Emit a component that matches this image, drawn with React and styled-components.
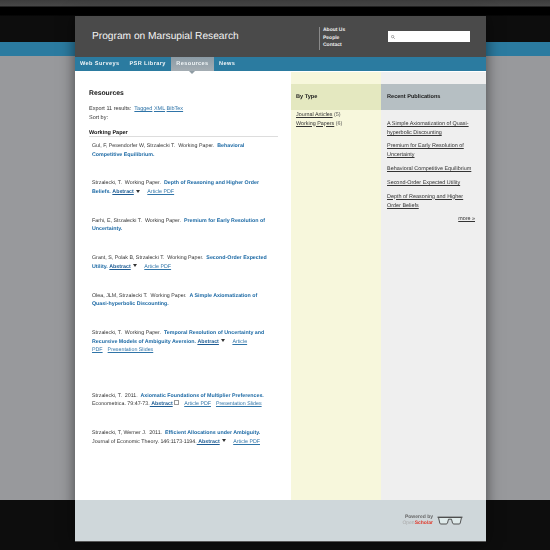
import React from 'react';
import styled, { createGlobalStyle } from 'styled-components';

const GlobalStyle = createGlobalStyle`
  html, body {
    margin: 0;
    padding: 0;
  }
  body {
    width: 550px;
    height: 550px;
    overflow: hidden;
    font-family: "Liberation Sans", Arial, sans-serif;
    text-rendering: geometricPrecision;
    background: linear-gradient(
      #3c3c3c 0, #474747 6px, #000 7px, #000 15px, #0d0d0d 16px, #0d0d0d 42px,
      #2b7ba0 42px, #2b7ba0 56px, #98999c 56px, #98999c 500px, #0d0d0d 500px
    );
  }
`;

const Card = styled.div`
  width: 411px;
  margin: 16px 0 0 75px;
  box-shadow: 0 0 14px rgba(0, 0, 0, 0.55);
  border-bottom: 1px solid #555;
  filter: blur(0.3px);
`;

const Header = styled.header`
  height: 41px;
  background: #4a4a4a;
  display: flex;
  align-items: center;
  padding-left: 17px;
`;

const SiteTitle = styled.h1`
  margin: 0;
  width: 227px;
  font-size: 10.2px;
  font-weight: normal;
  color: #f4f4f4;
`;

const HeaderLinks = styled.ul`
  list-style: none;
  margin: 4px 0 0;
  padding: 0 0 0 3px;
  width: 65px;
  border-left: 1px solid #8a8a8a;
  font-size: 5px;
  font-weight: bold;
  line-height: 7.5px;
  color: #eee;
`;

const SearchBox = styled.div`
  width: 82px;
  height: 11px;
  background: #fff;
  display: flex;
  align-items: center;
  padding-left: 3px;
  box-sizing: border-box;
  color: #777;
`;

const Nav = styled.nav`
  height: 14px;
  background: #2b7ba0;
  display: flex;
  border-bottom: 1px solid #fff;
`;

const Tab = styled.a`
  position: relative;
  display: flex;
  align-items: center;
  padding: 0 ${p => (p.$active ? 5.5 : 5)}px;
  font-size: 5.6px;
  font-weight: bold;
  letter-spacing: 0.4px;
  color: #f2f6f8;
  background: ${p => (p.$active ? 'linear-gradient(#8b9ba5, #a4adb3)' : 'transparent')};
  ${p => p.$active && `
    &::after {
      content: '';
      position: absolute;
      left: 50%;
      bottom: -3px;
      margin-left: -3px;
      border: solid transparent;
      border-width: 3px 3px 0;
      border-top-color: #8f9ca4;
    }
  `}
`;

const Main = styled.div`
  display: flex;
  height: 428px;
`;

const Content = styled.main`
  width: 216px;
  box-sizing: border-box;
  padding: 17px 13px 0 14px;
  background: #fff;
  font-size: 5.5px;
  line-height: 8.7px;
  color: #333;
`;

const PageTitle = styled.h2`
  margin: 0 0 7px;
  font-size: 6.8px;
  line-height: 9px;
  color: #111;
`;

const Meta = styled.div`
  color: #333;
`;

const TextLink = styled.a`
  color: #2f74a8;
  text-decoration: underline;
  margin-left: ${p => p.$gap || 0}px;
`;

const GroupTitle = styled.h3`
  margin: 7.2px 0 0;
  border-bottom: 1px solid #ddd;
  font-size: 5.5px;
  line-height: 6px;
  color: #111;
`;

const Entries = styled.div`
  padding: 5.3px 8px 0 3px;
  font-size: 5.3px;
`;

const Entry = styled.p`
  margin: 0 0 ${p => p.$after || 20}px;
  white-space: nowrap;
`;

const PubTitle = styled.a`
  color: #1d6aa5;
  font-weight: bold;
  margin-left: 1.5px;
`;

const AbstractLink = styled.a`
  color: #1d5c94;
  font-weight: bold;
  text-decoration: underline;
`;

const Caret = styled.span`
  display: inline-block;
  margin: 0 7.5px 0 2px;
  border: solid transparent;
  border-width: 3px 2px 0;
  border-top-color: #333;
  vertical-align: 0.5px;
`;

const ExternalMark = styled.span`
  display: inline-block;
  width: 3px;
  height: 3px;
  margin: 0 5px 0 1.5px;
  border: 0.5px solid #999;
  vertical-align: 0;
`;

const TypeColumn = styled.aside`
  width: 90px;
  padding-top: 12px;
  background: #f7f7dc;
`;

const RecentColumn = styled.aside`
  width: 105px;
  padding-top: 12px;
  background: #efefef;
`;

const SideHeading = styled.h4`
  margin: 0;
  height: 26px;
  box-sizing: border-box;
  padding-left: ${p => p.$indent}px;
  display: flex;
  align-items: center;
  background: ${p => p.$bg};
  font-size: 5.6px;
  color: #1a1a1a;
`;

const TypeList = styled.ul`
  list-style: none;
  margin: 0;
  padding: 0.8px 0 0 5px;
  font-size: 5.4px;
  line-height: 8.7px;
  color: #555;
`;

const SideLink = styled.a`
  color: #333;
  text-decoration: underline;
`;

const RecentList = styled.ul`
  list-style: none;
  margin: 0;
  padding: 9.8px 14px 0 6px;
  font-size: 5.45px;
  line-height: 9px;
`;

const RecentItem = styled.li`
  margin-bottom: 4.7px;
`;

const More = styled.div`
  padding-right: 11px;
  text-align: right;
  font-size: 5.4px;
  line-height: 9px;
  color: #333;
  text-decoration: underline;
`;

const Footer = styled.footer`
  height: 41px;
  background: #cfd7da;
  display: flex;
  justify-content: flex-end;
  align-items: center;
  padding-right: 23px;
  gap: 4px;
`;

const PoweredBy = styled.div`
  font-size: 5px;
  line-height: 5.5px;
  font-weight: bold;
  text-align: right;
  color: #666;
`;

const OpenWord = styled.span`
  color: #aaa;
  font-weight: normal;
`;

const ScholarWord = styled.span`
  color: #e0392b;
`;

const abstractAnd = (slides) => (
  <>
    <TextLink>Article PDF</TextLink>
    {slides && <TextLink $gap={5}>Presentation Slides</TextLink>}
  </>
);

const Glasses = () => (
  <svg width="26" height="9" viewBox="0 0 26 9" fill="none">
    <path d="M0.5 1.2H25.5" stroke="#444" strokeWidth="1.1" />
    <path d="M1.5 1.5L2.8 7.2C3 7.9 3.4 8 4 8H9.2C9.8 8 10.2 7.7 10.5 7L11.5 3.2H14.5L15.5 7C15.8 7.7 16.2 8 16.8 8H22C22.6 8 23 7.9 23.2 7.2L24.5 1.5Z" fill="#dfeaea" stroke="#444" strokeWidth="0.9" />
  </svg>
);

const App = () => (
  <>
    <GlobalStyle />
    <Card>
      <Header>
        <SiteTitle>Program on Marsupial Research</SiteTitle>
        <HeaderLinks>
          <li>About Us</li>
          <li>People</li>
          <li>Contact</li>
        </HeaderLinks>
        <SearchBox>
          <svg width="4" height="4" viewBox="0 0 10 10" fill="none" stroke="currentColor" strokeWidth="1.6">
            <circle cx="4" cy="4" r="3" />
            <path d="M6.3 6.3L9.5 9.5" />
          </svg>
        </SearchBox>
      </Header>
      <Nav>
        <Tab>Web Surveys</Tab>
        <Tab>PSR Library</Tab>
        <Tab $active>Resources</Tab>
        <Tab>News</Tab>
      </Nav>
      <Main>
        <Content>
          <PageTitle>Resources</PageTitle>
          <Meta>
            Export 11 results:&nbsp; <TextLink>Tagged</TextLink> <TextLink>XML</TextLink> <TextLink>BibTex</TextLink>
          </Meta>
          <Meta>Sort by:</Meta>
          <GroupTitle>Working Paper</GroupTitle>
          <Entries>
            <Entry>
              Gul, F, Pesendorfer W, Strzalecki T.&nbsp; Working Paper.
              <PubTitle> Behavioral<br />Competitive Equilibrium.</PubTitle>
            </Entry>
            <Entry>
              Strzalecki, T.&nbsp; Working Paper.
              <PubTitle> Depth of Reasoning and Higher Order<br />Beliefs.</PubTitle> <AbstractLink>Abstract</AbstractLink><Caret />{abstractAnd()}
            </Entry>
            <Entry>
              Farhi, E, Strzalecki T.&nbsp; Working Paper.
              <PubTitle> Premium for Early Resolution of<br />Uncertainty.</PubTitle>
            </Entry>
            <Entry>
              Grant, S, Polak B, Strzalecki T.&nbsp; Working Paper.
              <PubTitle> Second-Order Expected<br />Utility.</PubTitle> <AbstractLink>Abstract</AbstractLink><Caret />{abstractAnd()}
            </Entry>
            <Entry>
              Olea, JLM, Strzalecki T.&nbsp; Working Paper.
              <PubTitle> A Simple Axiomatization of<br />Quasi-hyperbolic Discounting.</PubTitle>
            </Entry>
            <Entry $after={36.7}>
              Strzalecki, T.&nbsp; Working Paper.
              <PubTitle> Temporal Resolution of Uncertainty and<br />Recursive Models of Ambiguity Aversion.</PubTitle> <AbstractLink>Abstract</AbstractLink><Caret /><TextLink>Article<br />PDF</TextLink><TextLink $gap={5}>Presentation Slides</TextLink>
            </Entry>
            <Entry>
              Strzalecki, T.&nbsp; 2011.
              <PubTitle> Axiomatic Foundations of Multiplier Preferences.</PubTitle><br />
              Econometrica. 79:47-73.<AbstractLink>&nbsp;Abstract</AbstractLink><ExternalMark />{abstractAnd(true)}
            </Entry>
            <Entry>
              Strzalecki, T, Werner J.&nbsp; 2011.
              <PubTitle> Efficient Allocations under Ambiguity.</PubTitle><br />
              Journal of Economic Theory. 146:1173-1194.<AbstractLink>&nbsp;Abstract</AbstractLink><Caret />{abstractAnd()}
            </Entry>
          </Entries>
        </Content>
        <TypeColumn>
          <SideHeading $indent={5} $bg="#e4e8c0">By Type</SideHeading>
          <TypeList>
            <li><SideLink>Journal Articles</SideLink> (5)</li>
            <li><SideLink>Working Papers</SideLink> (6)</li>
          </TypeList>
        </TypeColumn>
        <RecentColumn>
          <SideHeading $indent={6} $bg="#b6bfc3">Recent Publications</SideHeading>
          <RecentList>
            <RecentItem><SideLink>A Simple Axiomatization of Quasi-hyperbolic Discounting</SideLink></RecentItem>
            <RecentItem><SideLink>Premium for Early Resolution of Uncertainty</SideLink></RecentItem>
            <RecentItem><SideLink>Behavioral Competitive Equilibrium</SideLink></RecentItem>
            <RecentItem><SideLink>Second-Order Expected Utility</SideLink></RecentItem>
            <RecentItem><SideLink>Depth of Reasoning and Higher Order Beliefs</SideLink></RecentItem>
          </RecentList>
          <More>more »</More>
        </RecentColumn>
      </Main>
      <Footer>
        <PoweredBy>
          Powered by<br />
          <OpenWord>Open</OpenWord><ScholarWord>Scholar</ScholarWord>
        </PoweredBy>
        <Glasses />
      </Footer>
    </Card>
  </>
);

export default App;
